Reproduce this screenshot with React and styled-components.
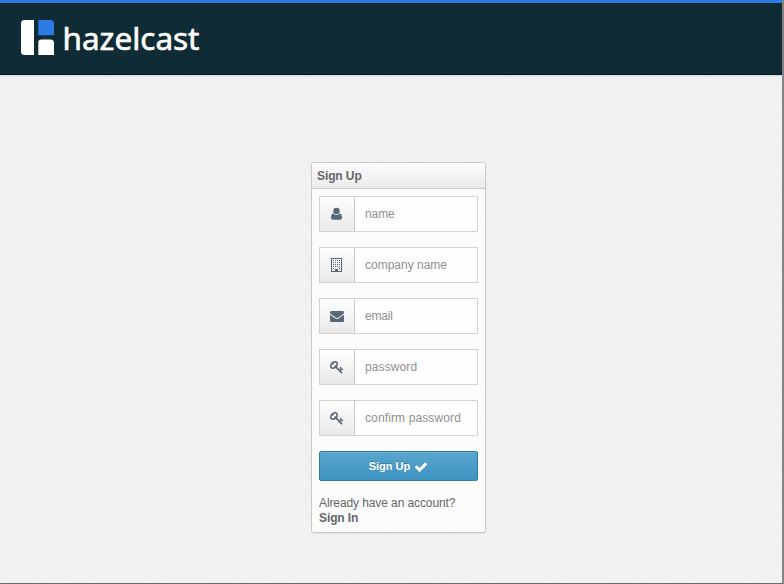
import React from "react";
import styled, { createGlobalStyle } from "styled-components";

const grain = encodeURIComponent(
  `<svg xmlns="http://www.w3.org/2000/svg" width="200" height="200"><filter id="n"><feTurbulence type="fractalNoise" baseFrequency="0.45" numOctaves="3" stitchTiles="stitch"/><feColorMatrix values="0 0 0 0 0.5  0 0 0 0 0.5  0 0 0 0 0.5  0.22 0 0 0 -0.08"/></filter><rect width="200" height="200" filter="url(#n)"/></svg>`
);

const GlobalStyle = createGlobalStyle`
  * { box-sizing: border-box; }
  body { margin: 0; overflow: hidden; font-family: "Liberation Sans", Arial, sans-serif; font-size: 12px; color: #666; }
`;

const Page = styled.div`
  height: 584px;
  display: flex;
  flex-direction: column;
  border-right: 2px solid #858585;
  border-bottom: 1px solid #6d686a;
  background: #f2f3f3 url("data:image/svg+xml,${grain}");
`;

const Header = styled.header`
  height: 75px;
  flex: none;
  padding: 17px 0 0 21px;
  background: #0e2b36;
  border-top: 3px solid #2c7ce3;
  border-bottom: 1px solid #06151b;
  box-shadow: 0 1px 2px rgba(0, 0, 0, 0.12);
`;

const Logo = styled.svg`
  display: block;
`;

const Wordmark = styled.text`
  font-family: "Noto Sans", sans-serif;
  font-size: 30.5px;
  fill: #fff;
  stroke: #fff;
  stroke-width: 0.6px;
`;

const Panel = styled.form`
  width: 175px;
  height: 371px;
  margin: 87px 0 0 311px;
  background: #fcfcfc;
  border: 1px solid #c9c9c9;
  border-radius: 3px;
  box-shadow: 0 1px 1px rgba(0, 0, 0, 0.06);
`;

const PanelTitle = styled.h1`
  margin: 0;
  height: 26px;
  padding: 1px 0 0 5px;
  font-size: 12px;
  line-height: 25px;
  letter-spacing: -0.1px;
  color: #666;
  border-bottom: 1px solid #c9c9c9;
  border-radius: 2px 2px 0 0;
  background: linear-gradient(#fdfdfd, #eaeaea);
`;

const PanelBody = styled.div`
  padding: 7px;
  display: flex;
  flex-direction: column;
  gap: 15px;
`;

const Field = styled.label`
  display: flex;
  height: 36px;
  border: 1px solid #d3d3d3;
`;

const AddOn = styled.span`
  width: 35px;
  display: flex;
  align-items: center;
  justify-content: center;
  border-right: 1px solid #cacaca;
  background: linear-gradient(#fefefe, #e9e9e9);
  color: #596673;
`;

const Input = styled.input`
  flex: 1;
  min-width: 0;
  padding: 0 0 1px 10px;
  border: 0;
  outline: 0;
  background: #fefefe;
  font: 12px "Liberation Sans", Arial, sans-serif;
  letter-spacing: ${(p) => p.$tracking};
  &::placeholder { color: #909090; opacity: 1; }
`;

const SubmitButton = styled.button`
  height: 30px;
  display: flex;
  align-items: center;
  justify-content: center;
  gap: 4px;
  padding: 0;
  border: 1px solid #2f7ba3;
  border-radius: 2px;
  background: linear-gradient(#59a6cd, #3d93c1);
  box-shadow: inset 0 1px 0 rgba(255, 255, 255, 0.1);
  font: bold 11px "Liberation Sans", Arial, sans-serif;
  color: #fff;
  text-shadow: 0 -1px 0 rgba(0, 0, 0, 0.25);
  svg { margin-top: 1px; }
`;

const Footnote = styled.p`
  margin: 0;
  line-height: 15px;
  letter-spacing: -0.1px;
  color: #666;
`;

const SignInLink = styled.a`
  display: block;
  font-weight: bold;
`;

const Glyph = ({ d, size = 14 }) => (
  <svg width={size} height={size} viewBox="0 0 1792 1792" fill="currentColor">
    <path d={d} />
  </svg>
);

const User = () => (
  <svg width="12" height="14" viewBox="0 0 12 14" fill="currentColor">
    <ellipse cx="5.500" cy="4" rx="3.200" ry="3.300" />
    <path d="M2.400 6.400Q3.700 7.900 5.500 7.900T8.600 6.400Q11 6.700 11 10.500Q11 12.800 9 12.800H2Q0 12.800 0 10.500Q0 6.700 2.400 6.400z" />
  </svg>
);

const paths = {
  envelope: "M1792 710v794q0 66-47 113t-113 47h-1472q-66 0-113-47t-47-113v-794q44 49 101 87 362 246 497 345 57 42 92.5 65.5t94.5 48 110 24.5h2q51 0 110-24.5t94.5-48 92.5-65.5q170-123 498-345 57-39 100-87zm0-294q0 79-49 151t-122 123q-376 261-468 325-10 7-42.5 31t-54 38.5-52 32.5-57.5 27-50 9h-2q-23 0-50-9t-57.5-27-52-32.5-54-38.5-42.5-31q-91-64-262-182.5t-205-142.5q-62-42-117-115.5t-55-136.5q0-78 41.5-130t118.5-52h1472q65 0 112.5 47t47.5 113z",
  key: "M832 512q0-80-56-136t-136-56-136 56-56 136q0 42 19 83-41-19-83-19-80 0-136 56t-56 136 56 136 136 56 136-56 56-136q0-42-19-83 41 19 83 19 80 0 136-56t56-136zm851 704q0 17-49 66t-66 49q-9 0-28.5-16t-36.5-33-38.5-40-24.5-26l-96 96 220 220q28 28 28 68 0 42-39 81t-81 39q-40 0-68-28l-671-671q-176 131-365 131-163 0-265.5-102.5t-102.5-265.5q0-160 95-313t248-248 313-95q163 0 265.5 102.5t102.5 265.5q0 189-131 365l355 355 96-96q-3-3-26-24.5t-40-38.5-33-36.5-16-28.5q0-17 49-66t66-49q13 0 23 10 6 6 46 44.5t82 79.5 86.5 86 73 78 28.5 41z",
  check: "M1671 566q0 40-28 68l-724 724-136 136q-28 28-68 28t-68-28l-136-136-362-362q-28-28-28-68t28-68l136-136q28-28 68-28t68 28l294 295 656-657q28-28 68-28t68 28l136 136q28 28 28 68z",
};

const Building = () => (
  <svg width="12" height="14" viewBox="0 0 12 14" fill="currentColor" shapeRendering="crispEdges">
    <path fillRule="evenodd" d="M0 0h11v14H0zM1 1v12h3v-2h3v2h3V1z" />
    {[2, 4, 6, 8].map((y) =>
      [2, 4, 6, 8].map((x) => <rect key={`${x}-${y}`} x={x} y={y} width="1" height="1" />)
    )}
    <rect x="2" y="10" width="1" height="1" />
    <rect x="8" y="10" width="1" height="1" />
  </svg>
);

const fields = [
  { label: "name", type: "text", tracking: "-0.1px", icon: <User /> },
  { label: "company name", type: "text", tracking: "0", icon: <Building /> },
  { label: "email", type: "email", tracking: "-0.2px", icon: <Glyph d={paths.envelope} /> },
  { label: "password", type: "password", tracking: "0.1px", icon: <Glyph d={paths.key} /> },
  { label: "confirm password", type: "password", tracking: "0.12px", icon: <Glyph d={paths.key} /> },
];

export default function App() {
  return (
    <Page>
      <GlobalStyle />
      <Header>
        <Logo width="200" height="50" viewBox="0 0 200 50" role="img" aria-label="hazelcast">
          <path d="M3.500 0H13V35H3.500Q0 35 0 31.500V3.500Q0 0 3.500 0z" fill="#fff" />
          <path d="M17.300 0H29.500Q33 0 33 3.500V15.200H17.300z" fill="#2c7ce3" />
          <path d="M20.500 19.500H29.500Q33 19.500 33 23V35H17.300V22.700Q17.300 19.500 20.500 19.500z" fill="#fff" />
          <Wordmark x="41.500" y="30" textLength="137" lengthAdjust="spacingAndGlyphs">hazelcast</Wordmark>
        </Logo>
      </Header>
      <Panel>
        <PanelTitle>Sign Up</PanelTitle>
        <PanelBody>
          {fields.map((f) => (
            <Field key={f.label}>
              <AddOn>{f.icon}</AddOn>
              <Input type={f.type} placeholder={f.label} $tracking={f.tracking} />
            </Field>
          ))}
          <SubmitButton type="button">
            Sign Up <Glyph d={paths.check} />
          </SubmitButton>
          <Footnote>
            Already have an account?
            <SignInLink>Sign In</SignInLink>
          </Footnote>
        </PanelBody>
      </Panel>
    </Page>
  );
}
